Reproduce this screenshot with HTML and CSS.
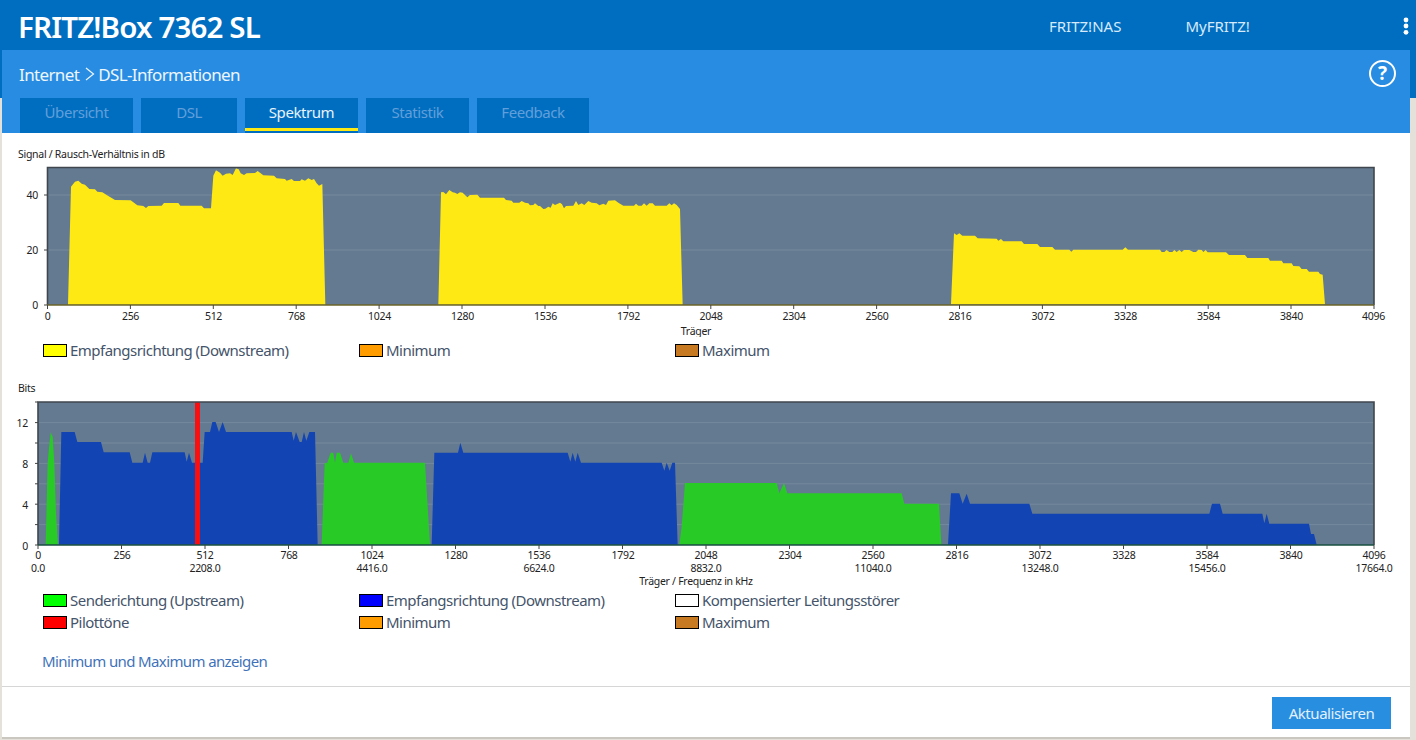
FILE: index.html
```html
<!DOCTYPE html>
<html lang="de">
<head>
<meta charset="utf-8">
<title>FRITZ!Box 7362 SL</title>
<link rel="stylesheet" href="styles.css">
</head>
<body>
<header class="top">
  <div class="brand">FRITZ!Box 7362 SL</div>
  <nav class="toplinks"><a>FRITZ!NAS</a><a>MyFRITZ!</a></nav>
  <svg class="dots" width="6" height="18" viewBox="0 0 6 18"><circle cx="3" cy="3" r="2.4"/><circle cx="3" cy="9" r="2.4"/><circle cx="3" cy="15.3" r="2.4"/></svg>
</header>
<main class="page">
  <section class="band">
    <div class="crumbs">
      <span>Internet</span>
      <svg class="chev" width="10" height="14" viewBox="0 0 10 14"><path d="M1 1l7.5 6L1 13"/></svg>
      <span>DSL-Informationen</span>
      <span class="help"><span>?</span></span>
    </div>
    <div class="tabs">
      <a class="tab t1">Übersicht</a>
      <a class="tab t2">DSL</a>
      <a class="tab t3 active">Spektrum</a>
      <a class="tab t4">Statistik</a>
      <a class="tab t5">Feedback</a>
    </div>
  </section>
  <section class="content">
    <svg class="chart c1" width="1408" height="192" viewBox="2 145 1408 192">
      <text class="lab" x="18" y="158">Signal / Rausch-Verhältnis in dB</text>
      <rect class="plot" x="47.5" y="167.5" width="1326.5" height="137.5"/>
      <path class="grid" d="M47.5 250H1374M47.5 195H1374"/>
      <g transform="translate(0 160) scale(.33333)"><polygon class="yellow" points="204,434 213,80 225,65 235,62 245,71 255,74 268,87 285,88 292,95 307,97 320,105 345,120 392,121 412,136 430,138 438,144 445,138 485,137 492,129 535,129 541,137 605,137 612,145 633,145 640,47 648,31 660,38 668,47 678,41 690,40 698,45 708,25 716,28 722,40 732,45 740,40 765,39 773,33 790,46 822,47 830,55 855,57 860,62 875,57 882,63 900,63 905,58 915,62 925,55 935,60 942,57 950,70 957,77 967,72 976,434"/></g>
      <g transform="translate(360 160) scale(.33333)"><polygon class="yellow" points="235,434 243,97 250,96 258,103 268,90 278,97 285,98 292,102 300,97 308,98 322,112 330,105 352,104 360,113 432,113 438,120 455,122 460,128 478,128 485,123 495,128 505,130 510,136 520,135 525,130 535,138 540,138 550,147 556,146 565,140 572,143 578,130 585,135 590,133 600,128 606,133 612,145 618,138 640,137 648,123 655,135 665,130 673,135 685,123 695,128 710,130 718,136 730,131 738,135 745,122 765,121 775,128 790,137 822,137 828,131 835,137 845,137 852,130 860,137 868,130 878,130 885,137 920,137 928,130 935,136 942,130 950,135 960,147 968,434"/></g>
      <g transform="translate(930 220) scale(.33333)"><polygon class="yellow" points="63,253 72,40 80,45 88,40 97,47 135,47 143,55 200,56 205,62 213,57 220,64 275,64 282,72 322,72 330,81 367,81 375,89 418,89 424,95 430,89 578,89 586,82 594,89 690,89 695,96 703,96 710,90 718,96 727,96 733,90 740,96 748,90 755,96 762,90 778,90 790,96 798,96 805,89 815,90 820,96 827,90 833,97 888,97 897,105 945,105 952,114 1015,114 1020,122 1055,122 1060,130 1085,130 1090,138 1108,139 1115,147 1130,147 1137,155 1165,155 1170,162 1178,164 1185,253"/></g>
      <path class="frame" d="M47.5 305V167.5H1374V305"/>
      <path class="base-y" d="M47 305H1374"/>
      <path class="tick" d="M44 250H47M44 195H47M44 305H47M47.5 305v4M130.4 305v4M213.3 305v4M296.2 305v4M379.1 305v4M462 305v4M545 305v4M627.9 305v4M710.8 305v4M793.7 305v4M876.6 305v4M959.5 305v4M1042.4 305v4M1125.3 305v4M1208.2 305v4M1291 305v4M1374 305v4"/>
      <g class="end"><text x="38" y="199">40</text><text x="38" y="254">20</text><text x="38" y="309">0</text></g>
      <g class="mid">
        <text x="47.5" y="320">0</text><text x="130.5" y="320">256</text><text x="213.5" y="320">512</text><text x="296.5" y="320">768</text><text x="379.5" y="320">1024</text><text x="462.5" y="320">1280</text><text x="545.5" y="320">1536</text><text x="628.5" y="320">1792</text><text x="711" y="320">2048</text><text x="794" y="320">2304</text><text x="877" y="320">2560</text><text x="960" y="320">2816</text><text x="1043" y="320">3072</text><text x="1125.5" y="320">3328</text><text x="1208.5" y="320">3584</text><text x="1291.5" y="320">3840</text><text x="1373.5" y="320">4096</text>
        <text x="696" y="335">Träger</text>
      </g>
    </svg>
    <ul class="legend l1">
      <li><i class="sw s-yellow"></i>Empfangsrichtung (Downstream)</li>
      <li><i class="sw s-orange"></i>Minimum</li>
      <li><i class="sw s-brown"></i>Maximum</li>
    </ul>
    <svg class="chart c2" width="1408" height="210" viewBox="2 380 1408 210">
      <text class="lab" x="18" y="392">Bits</text>
      <rect class="plot" x="38" y="402" width="1336" height="143"/>
      <path class="grid" d="M38 524.6H1374M38 504.2H1374M38 483.8H1374M38 463.4H1374M38 443H1374M38 422.6H1374"/>
      <g transform="translate(0 380) scale(.33333)">
        <polygon class="green" points="137,494 143,250 146,215 152,157 158,170 163,250 168,400 174,494"/>
        <polygon class="blue" points="177,494 184,156 224,156 232,186 303,186 311,217 389,217 397,248 428,248 435,218 443,248 450,248 457,217 554,217 560,245 567,218 576,248 608,248 614,156 630,156 637,126 647,126 657,156 668,126 678,156 875,156 881,182 888,156 899,186 905,186 912,156 919,182 928,156 945,156 953,494"/>
      </g>
      <g transform="translate(320 430) scale(.33333)">
        <polygon class="green" points="5,344 14,100 22,98 32,68 40,68 45,98 50,68 60,68 70,98 85,98 93,70 102,98 315,98 320,180 330,344"/>
        <polygon class="blue" points="335,344 343,68 414,68 421,38 430,68 743,68 751,95 758,68 766,95 773,68 783,98 1025,98 1033,122 1040,98 1049,122 1057,98 1065,98 1073,344"/>
      </g>
      <g transform="translate(670 470) scale(.33333)">
        <polygon class="green" points="28,224 35,170 45,39 320,39 328,70 342,39 352,70 695,70 703,101 807,101 814,224"/>
      </g>
      <g transform="translate(930 480) scale(.33333)">
        <polygon class="blue" points="54,194 63,40 88,40 98,71 110,41 120,71 298,71 307,101 838,101 846,71 870,71 878,101 997,101 1003,130 1010,101 1018,131 1137,131 1143,162 1152,162 1160,194"/>
      </g>
      <rect class="red" x="195" y="402" width="5" height="143"/>
      <path class="frame" d="M38 545V402H1374V545"/>
      <path class="base-b" d="M38 545H1374"/>
      <path class="tick" d="M35 545H38M35 524.6H38M35 504.2H38M35 483.8H38M35 463.4H38M35 443H38M35 422.6H38M35 402H38M38 545v4M121.5 545v4M205 545v4M288.5 545v4M372 545v4M455.5 545v4M539 545v4M622.5 545v4M706 545v4M789.5 545v4M873 545v4M956.5 545v4M1040 545v4M1123.5 545v4M1207 545v4M1290.5 545v4M1374 545v4"/>
      <g class="end"><text x="28" y="427">12</text><text x="28" y="468">8</text><text x="28" y="509">4</text><text x="28" y="550">0</text></g>
      <g class="mid">
        <text x="38" y="559">0</text><text x="122" y="559">256</text><text x="205" y="559">512</text><text x="289" y="559">768</text><text x="372" y="559">1024</text><text x="456" y="559">1280</text><text x="539" y="559">1536</text><text x="623" y="559">1792</text><text x="706" y="559">2048</text><text x="790" y="559">2304</text><text x="873" y="559">2560</text><text x="957" y="559">2816</text><text x="1040" y="559">3072</text><text x="1124" y="559">3328</text><text x="1207" y="559">3584</text><text x="1291" y="559">3840</text><text x="1374" y="559">4096</text>
        <text x="38" y="572">0.0</text><text x="205" y="572">2208.0</text><text x="372" y="572">4416.0</text><text x="539" y="572">6624.0</text><text x="706" y="572">8832.0</text><text x="873" y="572">11040.0</text><text x="1040" y="572">13248.0</text><text x="1207" y="572">15456.0</text><text x="1374" y="572">17664.0</text>
        <text x="696" y="585">Träger / Frequenz in kHz</text>
      </g>
    </svg>
    <ul class="legend l2">
      <li><i class="sw s-green"></i>Senderichtung (Upstream)</li>
      <li><i class="sw s-blue"></i>Empfangsrichtung (Downstream)</li>
      <li><i class="sw s-white"></i>Kompensierter Leitungsstörer</li>
      <li><i class="sw s-red"></i>Pilottöne</li>
      <li><i class="sw s-orange"></i>Minimum</li>
      <li><i class="sw s-brown"></i>Maximum</li>
    </ul>
    <a class="toggle">Minimum und Maximum anzeigen</a>
  </section>
  <footer class="foot"><button class="btn" type="button">Aktualisieren</button></footer>
</main>
</body>
</html>
```
FILE: styles.css
```css
* { box-sizing: border-box; }
html, body { margin: 0; height: 740px; overflow: hidden; }
body {
  background: linear-gradient(#006ec0 98px, #e4e1da 98px);
  font-family: "Noto Sans", sans-serif;
  color: #44546a;
}
.top { height: 50px; display: flex; align-items: center; padding-left: 18px; color: #fff; }
.brand { font-size: 29.5px; font-weight: 600; letter-spacing: -0.85px; line-height: 50px; width: 1031px; padding-top: 3px; }
.toplinks { display: flex; gap: 64px; color: #d6eafb; font-size: 15px; margin-top: 2px; }
.dots { fill: #fff; margin-left: 153px; margin-top: 1px; }
.page { margin: 0 6px 0 2px; height: 687px; background: #fff; box-shadow: 0 2px 0 #c9c7c0; }
.band { height: 83px; background: #288de2; display: flex; flex-direction: column; }
.crumbs { height: 48px; display: flex; align-items: center; padding: 0 0 0 17px; color: #eef6fd; font-size: 17px; letter-spacing: -0.63px; }
.chev { fill: none; stroke: #eef6fd; stroke-width: 1.2; margin: 0 3px 0 6px; }
.help { margin-left: auto; margin-right: 14px; margin-top: -2px; width: 27px; height: 27px; border: 2.2px solid #fff; border-radius: 50%; display: flex; align-items: center; justify-content: center; color: #fff; font-weight: 700; font-size: 19px; letter-spacing: 0; line-height: 1; }
.tabs { display: flex; gap: 8px; padding-left: 18px; }
.tab { height: 35px; line-height: 29px; background: #006ec0; color: #629fda; font-size: 15px; letter-spacing: -0.44px; text-align: center; }
.t1 { width: 113px; } .t2 { width: 96px; } .t3 { width: 113px; } .t4 { width: 103px; } .t5 { width: 112px; }
.tab.active { color: #e8f3fc; box-shadow: inset 0 -2px 0 #006ec0, inset 0 -5px 0 #ffe915; }
.content { height: 554px; border-bottom: 1px solid #d6d6d6; padding-top: 12px; }
.chart { display: block; }
.lab, .end text, .mid text { font-family: "Noto Sans", sans-serif; font-size: 10.5px; letter-spacing: -0.28px; fill: #222; }
.end text { text-anchor: end; }
.mid text { text-anchor: middle; }
.plot { fill: #647a91; }
.grid { fill: none; stroke: #76899d; stroke-width: 1; }
.yellow { fill: #ffe915; }
.blue { fill: #1245b3; }
.green { fill: #28cb25; }
.red { fill: #f90f0f; }
.frame { fill: none; stroke: #3f464d; stroke-width: 1.6; }
.base-y { fill: none; stroke: #6a6429; stroke-width: 1.6; }
.base-b { fill: none; stroke: #184f3f; stroke-width: 1.6; }
.tick { fill: none; stroke: #444; stroke-width: 1; }
.legend { list-style: none; margin: 0; padding: 0 0 0 41px; display: grid; grid-template-columns: repeat(3, 316px); grid-auto-rows: 22px; font-size: 15px; letter-spacing: -0.52px; }
.legend li { display: flex; align-items: center; white-space: nowrap; }
.l1 { margin-top: 2px; height: 41px; }
.l2 { margin-top: -1px; }
.sw { width: 24px; height: 13px; border: 1.5px solid #000; margin-right: 3px; flex: none; }
.s-yellow { background: #ff0; } .s-orange { background: #ff9c00; } .s-brown { background: #c87a22; }
.s-green { background: #0f0; } .s-blue { background: #00f; } .s-white { background: #fff; } .s-red { background: #f00; }
.toggle { display: block; margin: 17px 0 0 40px; color: #3f73b9; font-size: 15px; letter-spacing: -0.62px; line-height: 22px; }
.foot { display: flex; justify-content: flex-end; padding: 10px 19px 0 0; }
.btn { width: 119px; height: 32px; border: 0; background: #278ee0; color: #e2f1fd; font-family: "Noto Sans", sans-serif; font-size: 15px; letter-spacing: -0.46px; padding: 0; }
```
